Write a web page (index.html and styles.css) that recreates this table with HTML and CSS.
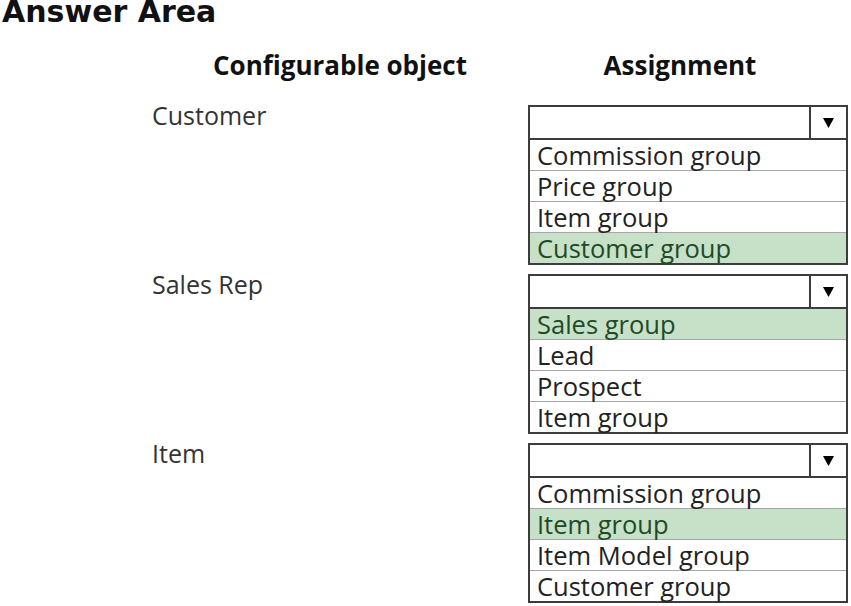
FILE: index.html
```html
<!DOCTYPE html>
<html lang="en">
<head>
<meta charset="utf-8">
<title>Answer Area</title>
<link rel="stylesheet" href="styles.css">
</head>
<body>
<h1 class="title">Answer Area</h1>
<div class="grid">
  <div class="col-head col-head-left">Configurable object</div>
  <div class="col-head col-head-right">Assignment</div>

  <div class="label">Customer</div>
  <div class="select">
    <div class="select-head"><div class="select-field"></div><div class="select-btn"><svg width="11" height="10" viewBox="0 0 11 10"><polygon points="0,0 11,0 5.5,10" fill="#000"/></svg></div></div>
    <ul class="options">
      <li>Commission group</li>
      <li>Price group</li>
      <li>Item group</li>
      <li class="selected">Customer group</li>
    </ul>
  </div>

  <div class="label">Sales Rep</div>
  <div class="select">
    <div class="select-head"><div class="select-field"></div><div class="select-btn"><svg width="11" height="10" viewBox="0 0 11 10"><polygon points="0,0 11,0 5.5,10" fill="#000"/></svg></div></div>
    <ul class="options">
      <li class="selected">Sales group</li>
      <li>Lead</li>
      <li>Prospect</li>
      <li>Item group</li>
    </ul>
  </div>

  <div class="label">Item</div>
  <div class="select">
    <div class="select-head"><div class="select-field"></div><div class="select-btn"><svg width="11" height="10" viewBox="0 0 11 10"><polygon points="0,0 11,0 5.5,10" fill="#000"/></svg></div></div>
    <ul class="options">
      <li>Commission group</li>
      <li class="selected">Item group</li>
      <li>Item Model group</li>
      <li>Customer group</li>
    </ul>
  </div>
</div>
</body>
</html>
```
FILE: styles.css
```css
html, body {
  margin: 0;
  padding: 0;
  background: #ffffff;
}
body {
  width: 851px;
  height: 606px;
  overflow: hidden;
  font-family: "Open Sans", "Noto Sans", sans-serif;
  color: #222;
}
.title {
  margin: 0;
  padding-left: 2px;
  font-family: "DejaVu Sans", sans-serif;
  font-weight: bold;
  font-size: 30px;
  line-height: 24px;
  color: #111;
}
.grid {
  display: grid;
  grid-template-columns: 376px 320px;
  padding-left: 152px;
  margin-top: 26px;
  row-gap: 9px;
  align-items: start;
}
.col-head {
  font-weight: bold;
  font-size: 26px;
  line-height: 30px;
  color: #111;
  text-align: center;
  margin-bottom: 16px;
}
.col-head-right {
  padding-right: 16px;
}
.label {
  font-size: 25px;
  line-height: 20px;
  color: #333;
}
.select {
  border: 2px solid #3c3c3c;
  display: flex;
  flex-direction: column;
}
.select-head {
  display: flex;
  height: 31px;
  border-bottom: 2px solid #3c3c3c;
}
.select-field {
  flex: 1;
}
.select-btn {
  width: 35px;
  border-left: 2px solid #3c3c3c;
  display: flex;
  align-items: center;
  justify-content: center;
}
.options {
  list-style: none;
  margin: 0;
  padding: 0;
}
.options li {
  height: 30px;
  font-size: 25.5px;
  line-height: 30px;
  padding-left: 7px;
  color: #222;
  border-top: 1px solid #a8a8a8;
  white-space: nowrap;
}
.options li:first-child {
  border-top: none;
}
.options li.selected {
  background: #c6e1c8;
  color: #1f4a26;
}
```
